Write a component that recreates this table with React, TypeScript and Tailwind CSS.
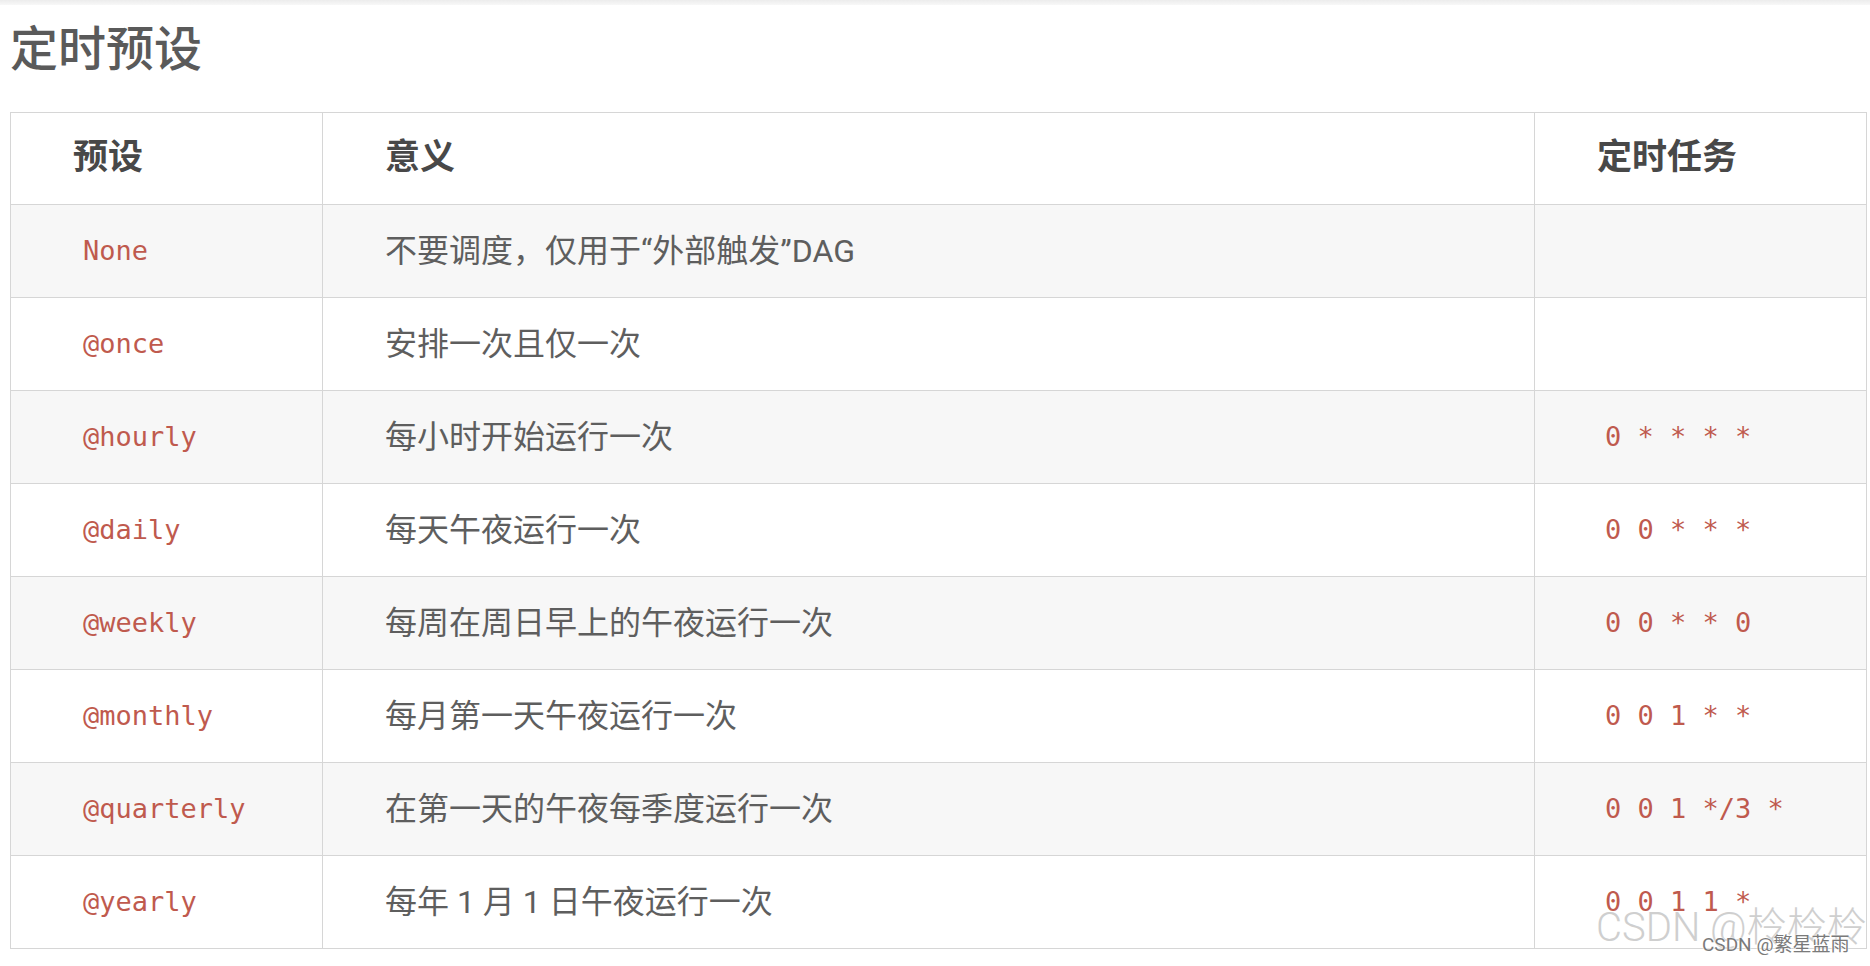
import React from "react";

// Preset schedule table
const presets = [
  { preset: "None", meaning: "不要调度，仅用于“外部触发”DAG", cron: "" },
  { preset: "@once", meaning: "安排一次且仅一次", cron: "" },
  { preset: "@hourly", meaning: "每小时开始运行一次", cron: "0 * * * *" },
  { preset: "@daily", meaning: "每天午夜运行一次", cron: "0 0 * * *" },
  { preset: "@weekly", meaning: "每周在周日早上的午夜运行一次", cron: "0 0 * * 0" },
  { preset: "@monthly", meaning: "每月第一天午夜运行一次", cron: "0 0 1 * *" },
  { preset: "@quarterly", meaning: "在第一天的午夜每季度运行一次", cron: "0 0 1 */3 *" },
  { preset: "@yearly", meaning: "每年 1 月 1 日午夜运行一次", cron: "0 0 1 1 *" },
];

const sans = "font-['Roboto','Noto_Sans_CJK_SC',sans-serif]";

function Code({ children }: { children: React.ReactNode }) {
  return (
    <code className="px-[10px] font-['DejaVu_Sans_Mono',monospace] text-[27px] text-[#bf5a4e] whitespace-pre">
      {children}
    </code>
  );
}

export default function App() {
  return (
    <div className={`relative w-[1870px] h-[966px] overflow-hidden bg-white ${sans}`}>
      {/* top shadow strip */}
      <div className="h-[5px] bg-gradient-to-b from-[#ececec] to-[#f8f8f8]" />

      <h1 className="mt-[15px] pl-[10px] text-[48px] leading-[60px] font-medium text-[#5a5a5a]">
        定时预设
      </h1>

      <table className="mt-[32px] ml-[10px] w-[1856px] table-fixed border-collapse">
        <colgroup>
          <col className="w-[312px]" />
          <col className="w-[1212px]" />
          <col className="w-[332px]" />
        </colgroup>
        <thead>
          <tr className="h-[92px] bg-white">
            <th className="border border-[#d6d6d6] pl-[62px] text-left text-[35px] font-bold text-[#484848]">预设</th>
            <th className="border border-[#d6d6d6] pl-[62px] text-left text-[35px] font-bold text-[#484848]">意义</th>
            <th className="border border-[#d6d6d6] pl-[62px] text-left text-[35px] font-bold text-[#484848]">定时任务</th>
          </tr>
        </thead>
        <tbody>
          {presets.map((row, i) => (
            <tr key={row.preset} className={`h-[93px] ${i % 2 === 0 ? "bg-[#f7f7f7]" : "bg-white"}`}>
              <td className="border border-[#d6d6d6] pl-[62px]">
                <Code>{row.preset}</Code>
              </td>
              <td className="border border-[#d6d6d6] pl-[62px] text-[32px] text-[#5e5e5e]">{row.meaning}</td>
              <td className="border border-[#d6d6d6] pl-[60px]">
                {row.cron && <Code>{row.cron}</Code>}
              </td>
            </tr>
          ))}
        </tbody>
      </table>

      {/* watermarks */}
      <div className="absolute left-[1596px] top-[904px] text-[40px] leading-[48px] font-light text-[#cfcfcf] whitespace-nowrap [text-shadow:0_0_2px_#fff]">
        CSDN @柃柃柃
      </div>
      <div className="absolute left-[1702px] top-[933px] text-[19px] leading-[24px] text-[#7a7a7a] whitespace-nowrap [text-shadow:0_0_2px_#fff,0_0_2px_#fff]">
        CSDN @繁星蓝雨
      </div>
    </div>
  );
}
